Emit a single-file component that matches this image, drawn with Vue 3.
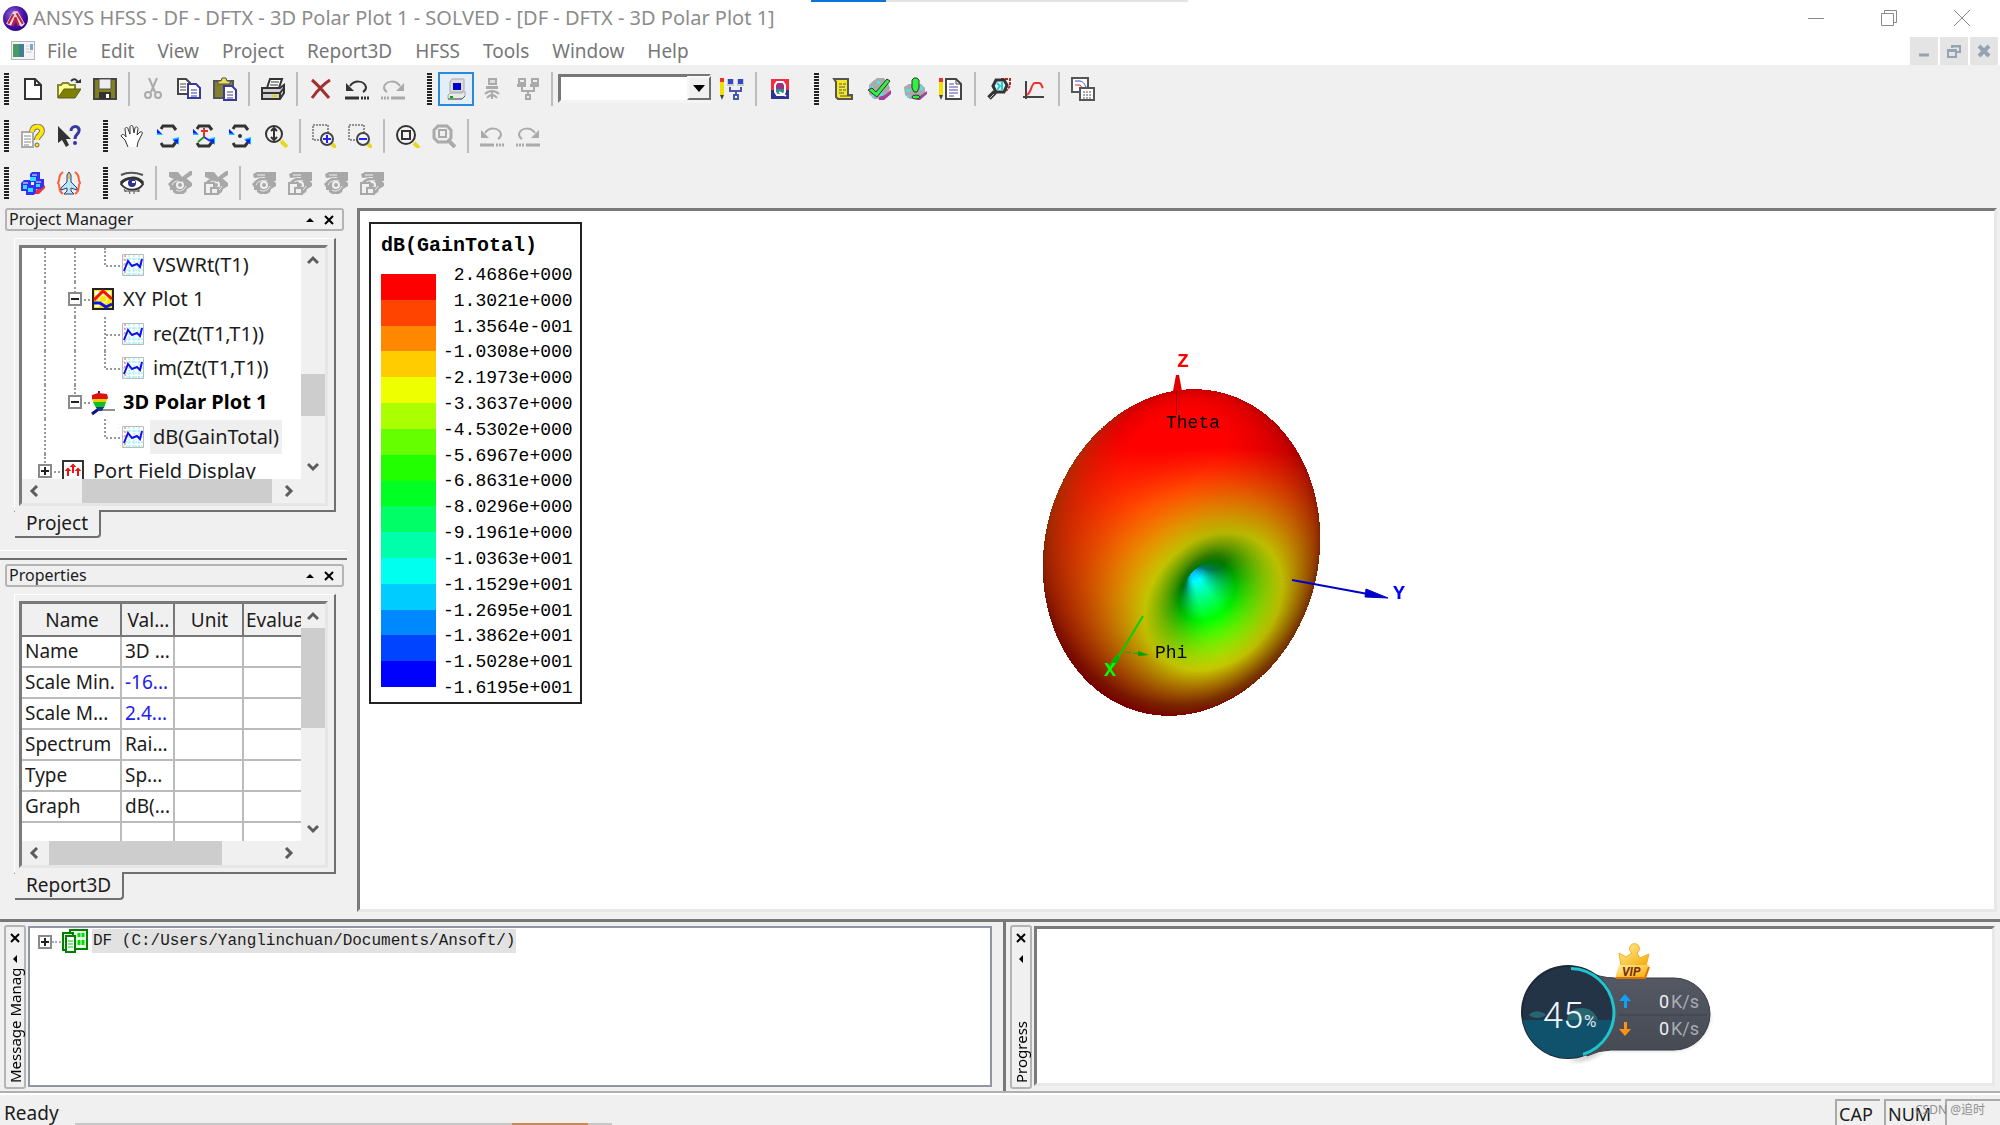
<!-- src/App.vue -->
<template>
  <div class="app">
    <header class="title-bar">
      <svg class="app-logo" viewBox="0 0 24 24">
        <defs>
          <radialGradient id="logoBall" cx="0.4" cy="0.35" r="0.7">
            <stop offset="0" stop-color="#8f6fd0" />
            <stop offset="0.6" stop-color="#4a10a8" />
            <stop offset="1" stop-color="#2c0080" />
          </radialGradient>
        </defs>
        <circle cx="12" cy="12" r="12" fill="url(#logoBall)" />
        <path d="M3 17l7-12h4l7 12-3 3-2-1-4-9-4 9-3-1z" fill="#e4d8ea" />
        <path d="M5 17l5-9M9 19l3-8M15 19l-3-8M19 17L13 7" stroke="#c8202c" stroke-width="2" fill="none" />
      </svg>
      <h1 class="title-text">ANSYS HFSS - DF - DFTX - 3D Polar Plot 1 - SOLVED - [DF - DFTX - 3D Polar Plot 1]</h1>
      <div class="load-strip"><span class="load-done"></span></div>
      <div class="window-buttons">
        <button aria-label="Minimize"><svg viewBox="0 0 16 16"><path d="M0 8.500h16" /></svg></button>
        <button aria-label="Restore"><svg viewBox="0 0 16 16"><path d="M.5 3.500h12v12H.5zM3.500 3.500v-3h12v12h-3" /></svg></button>
        <button aria-label="Close"><svg viewBox="0 0 16 16"><path d="M0 0l16 16M16 0L0 16" /></svg></button>
      </div>
    </header>

    <nav class="menu-bar">
      <svg class="menu-doc" viewBox="0 0 24 19">
        <rect x="0.5" y="0.500" width="23" height="18" fill="#f4f4f4" stroke="#b8b8b8" />
        <rect x="2" y="3" width="11" height="13" fill="#3f7f98" />
        <path d="M2 3h6v13H2z" fill="#4a9a60" />
        <path d="M19 3h3v6h-3z" fill="#7fa4c8" />
        <path d="M15 5h3M15 8h3M15 11h6" stroke="#ccc" />
      </svg>
      <button v-for="m in menus" :key="m" class="menu-item">{{ m }}</button>
      <div class="mdi-buttons">
        <button aria-label="Minimize child"><svg viewBox="0 0 14 14"><path d="M2 11h10" stroke-width="3" /></svg></button>
        <button aria-label="Restore child"><svg viewBox="0 0 14 14"><path d="M5 4V2h8v6h-3M5 2.500h8" stroke-width="2" /><path d="M1 6h8v7H1zM1 7h8" stroke-width="2" /></svg></button>
        <button aria-label="Close child"><svg viewBox="0 0 14 14"><path d="M2 2l10 10M12 2L2 12" stroke-width="4" /></svg></button>
      </div>
    </nav>

    <div class="toolbars">
      <div v-for="(row, r) in toolbars" :key="r" class="tool-row">
        <div v-for="(group, g) in row" :key="g" class="tool-group">
          <span class="grip"></span>
          <template v-for="(item, i) in group" :key="i">
            <span v-if="item === '|'" class="tool-sep"></span>
            <span v-else-if="item === 'combo'" class="combo">
              <select aria-label="Machine"><option></option></select>
              <span class="combo-arrow"></span>
            </span>
            <button v-else class="tool-btn" :class="{ active: item === 'local' }" :aria-label="item">
              <svg viewBox="0 0 24 24" v-html="icons[item]"></svg>
            </button>
          </template>
        </div>
      </div>
    </div>

    <main class="workspace">
      <aside class="dock">
        <section class="dock-panel">
          <div class="dock-head">
            <h2>Project Manager</h2>
            <button aria-label="Collapse Project Manager"><svg viewBox="0 0 10 10"><path d="M1 7l4-4 4 4z" fill="#000" /></svg></button>
            <button aria-label="Close Project Manager"><svg viewBox="0 0 10 10"><path d="M1 1l8 8M9 1L1 9" stroke="#000" stroke-width="2" /></svg></button>
          </div>
          <div class="frame">
            <div class="sunken">
              <div class="scroll-row">
                <div class="view tree-view">
                  <ul class="tree">
                    <li v-for="node in tree" :key="node.label" class="node">
                      <span v-for="(c, i) in node.cells" :key="i" class="cell" :class="c">
                        <span v-if="c.includes('minus') || c.includes('plus')" class="expander" :class="{ closed: c.includes('plus') }"></span>
                      </span>
                      <svg class="node-icon" viewBox="0 0 22 22" v-html="treeIcons[node.icon]"></svg>
                      <span class="node-label" :class="{ bold: node.bold, selected: node.selected }">{{ node.label }}</span>
                    </li>
                  </ul>
                </div>
                <div class="vscroll">
                  <button aria-label="Scroll up"><svg viewBox="0 0 12 12"><path d="M1 9l5-5 5 5" /></svg></button>
                  <span class="thumb tree-thumb"></span>
                  <button aria-label="Scroll down"><svg viewBox="0 0 12 12"><path d="M1 3l5 5 5-5" /></svg></button>
                </div>
              </div>
              <div class="hscroll">
                <button aria-label="Scroll left"><svg viewBox="0 0 12 12"><path d="M9 1L4 6l5 5" /></svg></button>
                <span class="thumb tree-hthumb"></span>
                <button aria-label="Scroll right"><svg viewBox="0 0 12 12"><path d="M3 1l5 5-5 5" /></svg></button>
              </div>
            </div>
          </div>
          <button class="tab">Project</button>
        </section>

        <section class="dock-panel second">
          <div class="dock-head">
            <h2>Properties</h2>
            <button aria-label="Collapse Properties"><svg viewBox="0 0 10 10"><path d="M1 7l4-4 4 4z" fill="#000" /></svg></button>
            <button aria-label="Close Properties"><svg viewBox="0 0 10 10"><path d="M1 1l8 8M9 1L1 9" stroke="#000" stroke-width="2" /></svg></button>
          </div>
          <div class="frame">
            <div class="sunken">
              <div class="scroll-row">
                <div class="view props-view">
                  <table class="props">
                    <colgroup>
                      <col class="col-name" /><col class="col-value" /><col class="col-unit" /><col class="col-eval" />
                    </colgroup>
                    <thead>
                      <tr><th>Name</th><th>Val...</th><th>Unit</th><th>Evalua</th></tr>
                    </thead>
                    <tbody>
                      <tr v-for="p in properties" :key="p.name">
                        <td>{{ p.name }}</td>
                        <td :class="{ editable: p.editable }">{{ p.value }}</td>
                        <td></td>
                        <td></td>
                      </tr>
                    </tbody>
                  </table>
                </div>
                <div class="vscroll">
                  <button aria-label="Scroll up"><svg viewBox="0 0 12 12"><path d="M1 9l5-5 5 5" /></svg></button>
                  <span class="thumb props-thumb"></span>
                  <button aria-label="Scroll down"><svg viewBox="0 0 12 12"><path d="M1 3l5 5 5-5" /></svg></button>
                </div>
              </div>
              <div class="hscroll">
                <button aria-label="Scroll left"><svg viewBox="0 0 12 12"><path d="M9 1L4 6l5 5" /></svg></button>
                <span class="thumb props-hthumb"></span>
                <button aria-label="Scroll right"><svg viewBox="0 0 12 12"><path d="M3 1l5 5-5 5" /></svg></button>
              </div>
            </div>
          </div>
          <button class="tab">Report3D</button>
        </section>
      </aside>

      <section class="viewer">
        <div class="legend">
          <h3>dB(GainTotal)</h3>
          <div class="legend-body">
            <div class="bands">
              <span v-for="n in 16" :key="n" :style="{ background: bandColor(n - 1) }"></span>
            </div>
            <ol class="levels">
              <li v-for="v in levels" :key="v">{{ v }}</li>
            </ol>
          </div>
        </div>
        <div class="plot">
          <canvas ref="plotRef" width="420" height="400"></canvas>
          <svg class="axes" viewBox="0 0 420 400">
            <path d="M157.500 50v26" stroke="#a00000" stroke-width="1" />
            <path d="M157 36h3l3 16h-9z" fill="#e00000" />
            <text x="158" y="28" fill="#f00" class="axis-name">Z</text>
            <text x="147" y="89" class="axis-text">Theta</text>
            <path d="M273 241l76 14" stroke="#0000c8" stroke-width="2" />
            <path d="M347 250l22 9-23-1z" fill="#0000c8" stroke="#0000c8" />
            <text x="374" y="260" fill="#00f" class="axis-name">Y</text>
            <path d="M124 277l-26 43" stroke="#00d000" stroke-width="2" />
            <path d="M98 316l-8 11 5 0 6-9z" fill="#00b000" stroke="#00c000" />
            <path d="M107 313l14 2" stroke="#00b000" stroke-width="1" stroke-dasharray="5 2" />
            <path d="M119 312l11 4-11 1z" fill="#00a000" />
            <text x="85" y="337" fill="#0f0" class="axis-name">X</text>
            <text x="136" y="319" class="axis-text">Phi</text>
          </svg>
        </div>
      </section>
    </main>

    <section class="bottom">
      <div class="bottom-pane messages">
        <div class="side-head">
          <button aria-label="Close Message Manager"><svg viewBox="0 0 10 10"><path d="M1 1l8 8M9 1L1 9" stroke="#000" stroke-width="2" /></svg></button>
          <button aria-label="Collapse Message Manager"><svg viewBox="0 0 10 10"><path d="M7 1L3 5l4 4z" fill="#000" /></svg></button>
          <span class="side-title">Message Manager</span>
        </div>
        <div class="message-box">
          <span class="expander closed"></span>
          <span class="dots"></span>
          <svg class="message-icon" viewBox="0 0 26 24">
            <path d="M8 1h17v19H8z" fill="#e6ffe6" stroke="#008000" stroke-width="2" />
            <path d="M1 4h10v17H1z" fill="#d8f8d8" stroke="#008000" stroke-width="2" />
            <path d="M4 7h9v16H4z" fill="#fff" stroke="#008000" stroke-width="2" />
            <path d="M6 12h5M6 15h5M6 18h5" stroke="#0c0" stroke-width="1" />
            <path d="M17 4v4M21 4v4M17 11v5M21 11v5" stroke="#00e000" stroke-width="3" />
          </svg>
          <span class="message-text">DF (C:/Users/Yanglinchuan/Documents/Ansoft/)</span>
        </div>
      </div>
      <div class="bottom-pane progress">
        <div class="side-head">
          <button aria-label="Close Progress"><svg viewBox="0 0 10 10"><path d="M1 1l8 8M9 1L1 9" stroke="#000" stroke-width="2" /></svg></button>
          <button aria-label="Collapse Progress"><svg viewBox="0 0 10 10"><path d="M7 1L3 5l4 4z" fill="#000" /></svg></button>
          <span class="side-title">Progress</span>
        </div>
        <div class="progress-box"></div>
      </div>
    </section>

    <footer class="status-bar">
      <span class="status-text">Ready</span>
      <span class="status-cell">CAP</span>
      <span class="status-cell wide">NUM</span>
      <span class="status-cell last"></span>
      <span class="strip"><span class="strip-accent"></span></span>
      <span class="watermark">CSDN @追时</span>
    </footer>

    <!-- floating network meter -->
    <svg class="meter" viewBox="0 0 200 124">
      <defs>
        <linearGradient id="pill" x1="0" y1="0" x2="0" y2="1">
          <stop offset="0" stop-color="#565a66" />
          <stop offset="1" stop-color="#444952" />
        </linearGradient>
        <linearGradient id="gold" x1="0" y1="0" x2="1" y2="1">
          <stop offset="0" stop-color="#fff0a0" />
          <stop offset="1" stop-color="#f8a800" />
        </linearGradient>
        <filter id="soft"><feGaussianBlur stdDeviation="2" /></filter>
        <clipPath id="disc"><circle cx="53" cy="72" r="46" /></clipPath>
      </defs>
      <path d="M53 121a47 47 0 0 0 36-11h70a36 36 0 0 0 36-36" fill="#888" opacity="0.5" filter="url(#soft)" />
      <path d="M70 30Q84 38 100 38h59a36 36 0 0 1 0 72H96Q84 110 72 116z" fill="url(#pill)" stroke="#3a3d44" />
      <path d="M104 75h88" stroke="#3c4048" />
      <circle cx="53" cy="72" r="47" fill="#1c2836" />
      <circle cx="53" cy="72" r="45" fill="#233447" />
      <g clip-path="url(#disc)">
        <path d="M52 80c0-8 6-12 15-12s14 6 16 12zM14 75c4-5 12-5 17 0-5 4-13 4-17 0z" fill="#27656f" />
        <rect x="5" y="80" width="96" height="42" fill="#10516c" />
      </g>
      <path d="M56 28.500a44 44 0 0 1 12 86" fill="none" stroke="#1fc4cc" stroke-width="3" />
      <text x="28" y="88" class="meter-big">45</text>
      <text x="69" y="87" class="meter-pct">%</text>
      <path d="M110 54l6 7h-4v7h-3v-7h-5z" fill="#12a0f4" />
      <path d="M110 96l6-7h-4v-7h-3v7h-5z" fill="#ff9310" />
      <text x="144" y="68" class="meter-num">0</text>
      <text x="156" y="68" class="meter-unit">K/s</text>
      <text x="144" y="95" class="meter-num">0</text>
      <text x="156" y="95" class="meter-unit">K/s</text>
      <path d="M106 26l-2-13 7 4 6-4a5 5 0 1 1 5 0l3 5 9-4-3 12z" fill="url(#gold)" stroke="#f0b020" />
      <path d="M104 25h30l-4 13h-30z" fill="url(#gold)" />
      <path d="M101 38h29l4-11" fill="none" stroke="#e07000" stroke-width="2" />
      <text x="107" y="36" class="meter-vip">VIP</text>
    </svg>
  </div>
</template>

<script setup>
import { ref, onMounted } from 'vue'

const menus = ['File', 'Edit', 'View', 'Project', 'Report3D', 'HFSS', 'Tools', 'Window', 'Help']

// '|' is a separator, 'combo' is the machine list
const toolbars = [
  [
    ['new', 'open', 'save', '|', 'cut', 'copy', 'paste', '|', 'print', '|', 'delete', 'undo', 'redo'],
    ['local', 'remote', 'distributed', '|', 'combo', 'editMachines', '|', 'queue'],
    ['notes', 'validate', 'analyze', 'editNotes', '|', 'solution', 'report', '|', 'matrix']
  ],
  [
    ['help', 'whatsThis'],
    ['pan', 'rotate', 'rotateAxis', 'rotateCenter', 'zoom', '|', 'zoomIn', 'zoomOut', '|', 'fitAll', 'fitSelection', '|', 'viewUndo', 'viewRedo']
  ],
  [
    ['cubes', 'plane'],
    ['eye', '|', 'hideSel', 'hideSelBox', '|', 'showSel', 'showSelBox', 'showAll', 'showAllBox']
  ]
]

const page = (x, y) => `<path d="M${x} ${y}h8l4 4v10h-12z" fill="#fff" stroke="#3a3a9c" stroke-width="2"/><path d="M${x + 3} ${y + 6}h6M${x + 3} ${y + 9}h6M${x + 3} ${y + 12}h6" stroke="#3a3a9c"/>`
const undoArc = (c) => `<path d="M5 9C9 3 19 3 21 10c0 3-1 4-3 5" fill="none" stroke="${c}" stroke-width="2"/><path d="M1 6v8h8z" fill="${c}"/><path d="M0 21h14M16 21h2M19 21h2M22 21h2" stroke="${c}" stroke-width="3"/>`
const redoArc = (c) => `<g transform="matrix(-1 0 0 1 24 0)">${undoArc(c)}</g>`
const rotateArrows = '<path d="M5 5l2-3h10l3 4M5 19l2 3h10l3-4" fill="none" stroke="#333" stroke-width="3"/><path d="M1 5v6h6z" fill="#00c8ff"/><path d="M1 5v4l5 1z" fill="#11f"/><path d="M23 13v8l-7-6z" fill="#00c8ff"/><path d="M22 15v5l-5-4z" fill="#11f"/>'
const lens = (x, y, r, c, handle) => `<path d="M${x + r - 1} ${y + r - 1}l6 6" stroke="${handle}" stroke-width="4"/><circle cx="${x}" cy="${y}" r="${r}" fill="#f4f4f4" stroke="${c}" stroke-width="2"/>`
const grayEye = '<path d="M0 13l4-4 4-2h10l6 5v3l-5 3-1 3-3 2H8l-3-2v-2H2v-3z" fill="#a8a8a8"/><path d="M4 14c2-4 6-5 11-4M8 19c3 2 8 1 10-4" fill="none" stroke="#f0f0f0" stroke-width="1"/><circle cx="12" cy="14" r="3" fill="none" stroke="#f0f0f0" stroke-width="2"/>'
const cross = '<path d="M1 1h9l4 5L22 0h2v4L13 11 1 6z" fill="#a8a8a8"/>'
const flag = '<path d="M1 3l4-2h19v9h-5L12 6 2 7z" fill="#a8a8a8"/><path d="M5 4h8" stroke="#f0f0f0"/>'
const box = '<path d="M1 12h9v11H1z" fill="#f0f0f0" stroke="#a8a8a8" stroke-width="2"/><path d="M7 17h7v6H7z" fill="#f0f0f0" stroke="#a8a8a8" stroke-width="2"/>'

const icons = {
  new: '<path d="M4 2h10l6 6v14H4z" fill="#fff" stroke="#333" stroke-width="2"/><path d="M14 2v6h6" fill="none" stroke="#333" stroke-width="2"/>',
  open: '<path d="M1 21V8h3l2-2h5l2 2h5v5" fill="#ffff90" stroke="#85853a" stroke-width="2"/><path d="M1 21l6-9h17l-6 9z" fill="#808000" stroke="#5c5c20"/><path d="M14 4c3-3 6-2 7 2" fill="none" stroke="#333" stroke-width="2"/><path d="M18 6h6V2z" fill="#333"/>',
  save: '<path d="M1 2h22v20H1z" fill="#808020" stroke="#444" stroke-width="2"/><path d="M6 2h12v10H6z" fill="#eee" stroke="#555"/><path d="M6 15h12v7H6z" fill="#333"/><path d="M13 17h3v4h-3z" fill="#fff"/>',
  cut: '<path d="M8 1l6 14M16 1l-6 14" stroke="#aaa" stroke-width="2"/><circle cx="7" cy="18" r="3" fill="none" stroke="#aaa" stroke-width="2"/><circle cx="17" cy="18" r="3" fill="none" stroke="#aaa" stroke-width="2"/>',
  copy: '<path d="M1 2h8l4 4v11H1z" fill="#fff" stroke="#444" stroke-width="2"/><path d="M3 7h6M3 10h6M3 13h6" stroke="#444"/>' + page(11, 7),
  paste: '<path d="M1 4h19v17H1z" fill="#808030" stroke="#555" stroke-width="2"/><path d="M5 7V4h3l1-3h4l1 3h3v3z" fill="#e8e050" stroke="#555"/>' + page(11, 9),
  print: '<path d="M6 11L9 2h12l-3 9" fill="#fff" stroke="#333" stroke-width="2"/><path d="M10 5h8M9 8h8" stroke="#333"/><path d="M1 11h18l4-3v8l-4 6H1z" fill="#d0d0d0" stroke="#333" stroke-width="2"/><path d="M1 16h18v5M19 16l4-5" fill="none" stroke="#333" stroke-width="2"/><path d="M11 19h5" stroke="#e0d800" stroke-width="2"/>',
  delete: '<path d="M3 3c6 5 11 11 17 18M21 3C13 8 8 14 3 21" fill="none" stroke="#a03030" stroke-width="3"/>',
  undo: undoArc('#333'),
  redo: redoArc('#aaa'),
  local: '<path d="M6 5l2-3h12v11l-2 2H6z" fill="#ddd" stroke="#aaa"/><path d="M9 6h8v7H9z" fill="#00c"/><path d="M4 18l2-2h12l3-2v5l-3 3H4z" fill="#e8e8e8" stroke="#aaa"/><path d="M4 22h14l3-3" fill="none" stroke="#555"/><path d="M6 20h3" stroke="#0a0" stroke-width="2"/>',
  remote: '<path d="M8 1h9v7H8zM6 9h12v3H6z" fill="#aaa"/><path d="M10 3h5v3h-5z" fill="#ddd"/><path d="M5 17c4-4 10-4 14 0M7 21c3-4 7-4 10 0M12 14v8" fill="none" stroke="#aaa" stroke-width="2"/>',
  distributed: '<path d="M2 1h8v6H2zM15 1h8v6h-8zM1 7h9v3H1zM14 7h9v3h-9z" fill="#aaa"/><path d="M4 3h4v2H4zM17 3h4v2h-4z" fill="#eee"/><path d="M6 10v4h12v-4M12 14v4" fill="none" stroke="#aaa" stroke-width="2"/><path d="M10 18h4v4h-4z" fill="#eee" stroke="#aaa" stroke-width="2"/>',
  editMachines: '<path d="M2 5v13" stroke="#f0e000" stroke-width="4"/><path d="M2 1v4" stroke="#f03030" stroke-width="4"/><path d="M0 18h4l-2 5z" fill="#444"/><path d="M7 2h7v7H7zM17 2h7v7h-7z" fill="#ccc"/><path d="M8 2h5v5H8zM18 2h5v5h-5z" fill="#3048c8"/><path d="M10 10v4h11v-4M16 14v4" fill="none" stroke="#4858b0" stroke-width="2"/><path d="M14 18h4v4h-4z" fill="#fff" stroke="#4858b0" stroke-width="2"/>',
  queue: '<path d="M3 2h18v20H3z" fill="#f03040"/><path d="M3 13h18v9H3z" fill="#2e3190"/><path d="M8 6h8v6H8z" fill="#a03080"/><path d="M8 12h8v6H8z" fill="#309090"/><path d="M9 5h6l2 3v7l-2 3H9l-2-3V8z" fill="none" stroke="#fff" stroke-width="2"/><path d="M11 15l7 4" stroke="#fff" stroke-width="2"/>',
  notes: '<path d="M3 2h14v16h4v4H7l-2-2V5z" fill="#f4e820" stroke="#555" stroke-width="2"/><path d="M8 7h3M12 7h3M8 10h6M8 13h3M12 13h3M8 16h5" stroke="#555" stroke-width="1"/><path d="M9 19h11" stroke="#555"/>',
  validate: '<path d="M2 8l4-4 4-3h7l4 5 2 5-2 7-5 4H7l-5-5z" fill="#aaa"/><path d="M12 23h5l7-6v-4l-6 5-6 2z" fill="#a040a0"/><path d="M3 9h3v3H3zM10 4h3v3h-3zM5 18h2v3H5zM13 16h3v3h-3z" fill="#50e0e8"/><path d="M1 13l4-2 4 4L20 2l3 2L10 20z" fill="#30f040" stroke="#333" stroke-width="1"/>',
  analyze: '<path d="M1 10l5-3h12l4 4v6l-6 5H7l-5-4z" fill="#aaa"/><path d="M13 23h4l7-6v-3l-7 5z" fill="#a040a0"/><path d="M3 12h4v3H3zM17 9h3v4h-3zM4 18h2v3H4z" fill="#50e0e8"/><path d="M9 3l2-2h3l2 2v8l-2 4h-3l-2-4z" fill="#30f040" stroke="#333"/><ellipse cx="13" cy="20" rx="4" ry="2" fill="#30f040" stroke="#333"/>',
  editNotes: '<path d="M2 5v13" stroke="#f0e000" stroke-width="4"/><path d="M2 1v4" stroke="#f03030" stroke-width="4"/><path d="M0 18h4l-2 5z" fill="#444"/><path d="M7 2h10l5 5v15H7z" fill="#fff" stroke="#444" stroke-width="2"/><path d="M17 2v5h5" fill="none" stroke="#444"/><path d="M10 7h5M10 10h9M10 13h9M10 16h9M10 19h5" stroke="#4848b0"/>',
  solution: '<path d="M14 2h9v7l-4 5" fill="none" stroke="#b02828" stroke-width="2" stroke-dasharray="3 1"/><path d="M9 3h8l3 5-3 7H9L6 9z" fill="#d8f8f8" stroke="#333" stroke-width="3"/><path d="M10 6l3 3-3 4M15 5v9" fill="none" stroke="#30c8d0" stroke-width="2"/><path d="M8 15l-6 6" stroke="#333" stroke-width="5"/><path d="M7 17l-4 4" stroke="#ccc"/>',
  report: '<path d="M3 4v18M0 20h21" fill="none" stroke="#444" stroke-width="2"/><path d="M4 18c5-3 4-12 8-12h4c3 0 2 3 4 5" fill="none" stroke="#f03030" stroke-width="2"/>',
  matrix: '<path d="M1 1h16v14H1z" fill="#fff" stroke="#555" stroke-width="2"/><path d="M4 4h5c4 1 5 4 6 6" stroke="#4040e0" fill="none"/><path d="M4 8h5l3 4" stroke="#e03030" fill="none"/><path d="M9 11h14v12H9z" fill="#fff" stroke="#555" stroke-width="2"/><path d="M12 15h8M12 18h8M12 21h8" stroke="#555" stroke-dasharray="2 1"/>',
  help: '<path d="M1 8h11v15H1z" fill="#fff" stroke="#aaa" stroke-width="2"/><path d="M3 12h7M3 15h7M3 18h7M3 21h5" stroke="#888"/><path d="M11 8c0-7 10-7 10-1 0 4-5 4-5 9" fill="none" stroke="#777" stroke-width="6"/><path d="M11 8c0-7 10-7 10-1 0 4-5 4-5 9" fill="none" stroke="#ffe800" stroke-width="4"/><circle cx="16" cy="21" r="2" fill="#ffe800" stroke="#666"/>',
  whatsThis: '<path d="M1 2v17l4-3 4 7 3-2-3-6h5z" fill="#333"/><path d="M14 7c0-6 9-6 8 0 0 3-4 3-4 8" fill="none" stroke="#3838a0" stroke-width="3"/><circle cx="18" cy="19" r="2" fill="#3838a0"/>',
  pan: '<path d="M8 23l-3-7-4-4c1-3 4-1 5 1L5 5c0-2 3-2 3 0l2 5V3c0-2 3-2 3 0l1 6 1-5c1-2 3-1 3 1l-1 6 3-3c2-1 3 1 2 2l-4 8-1 5" fill="#fff" stroke="#333" stroke-width="1"/>',
  rotate: rotateArrows,
  rotateAxis: rotateArrows + '<path d="M12 4v9M9 7h7" stroke="#e83030" stroke-width="2"/><path d="M12 13l-6 5" stroke="#20a020" stroke-width="2"/><path d="M12 13l6 4" stroke="#3030e0" stroke-width="2"/>',
  rotateCenter: rotateArrows + '<circle cx="12" cy="12" r="2" fill="#333"/>',
  zoom: lens(10, 10, 8, '#333', '#e8d820') + '<path d="M10 5v10M7 7l3-3 3 3M7 13l3 3 3-3" stroke="#333" fill="none" stroke-width="2"/>',
  zoomIn: '<path d="M1 1h15v15H1z" fill="none" stroke="#333" stroke-dasharray="2 1"/>' + lens(15, 15, 6, '#444', '#e8d820') + '<path d="M15 11v8M11 15h8" stroke="#22f" stroke-width="2"/>',
  zoomOut: '<path d="M1 1h15v15H1z" fill="none" stroke="#333" stroke-dasharray="2 1"/>' + lens(15, 15, 6, '#444', '#e8d820') + '<path d="M11 15h8" stroke="#22f" stroke-width="2"/>',
  fitAll: lens(10, 11, 9, '#333', '#e8d820') + '<path d="M6 7h8v8H6z" fill="none" stroke="#333" stroke-width="2"/>',
  fitSelection: '<path d="M16 16l7 7" stroke="#aaa" stroke-width="4"/><path d="M6 2h9l4 4v8l-4 4H6l-4-4V6z" fill="#f0f0f0" stroke="#aaa" stroke-width="3"/><path d="M7 6h7v7H7z" fill="none" stroke="#aaa" stroke-width="2"/>',
  viewUndo: undoArc('#aaa'),
  viewRedo: redoArc('#aaa'),
  cubes: '<path d="M12 23h6l7-7-4-4z" fill="#f03040"/><path d="M9 3l2-2h8v8l-2 2H9zM0 12l3-3h7v8l-2 3H0zM13 11l2-3h8v7l-3 3h-7zM5 17l3-3h7v7l-2 3H5z" fill="#3030f8"/><path d="M11 4h5M2 12h5M15 11h5" stroke="#fff"/><path d="M9 6h6v4H9zM2 14h4v4H2zM15 13h4v3h-4zM7 17h5v4H7z" fill="#30e0ff"/>',
  plane: '<path d="M6 1c-6 4-2 6-5 11 3 3-1 7 5 11M18 1c6 4 2 6 5 11-3 3 1 7-5 11" fill="none" stroke="#ff6038" stroke-width="2"/><path d="M12 1l2 3v7l6 6v2l-6-2v3l3 3h-10l3-3v-3l-6 2v-2l6-6V4z" fill="#b8e8f0" stroke="#303878"/><path d="M12 3v5" stroke="#d8c850" stroke-width="2"/>',
  eye: '<path d="M1 4c6-3 14-3 22 0" fill="none" stroke="#555" stroke-width="2"/><path d="M1 13c5-7 16-8 22 0-4 7-16 8-22 0z" fill="#fff" stroke="#333" stroke-width="2"/><path d="M1 12c5-6 16-7 22 0" fill="none" stroke="#333" stroke-width="3"/><circle cx="12" cy="12" r="4" fill="#303090"/><path d="M12 10h3v2h-3z" fill="#fff"/><path d="M4 18l2 3M9 20l1 3M14 20v3M19 18l-1 3M4 20h16" stroke="#555" stroke-width="1"/>',
  hideSel: grayEye + cross,
  hideSelBox: grayEye + cross + box,
  showSel: grayEye + flag,
  showSelBox: grayEye + flag + box,
  showAll: grayEye + flag,
  showAllBox: grayEye + flag + box
}

const treeIcons = {
  trace: '<path d="M.5.5h21v21H.5z" fill="#fff" stroke="#bbb"/><path d="M1 5h20M1 11h20M1 16h20M1 20h20M7 1v20M12 1v20M17 1v20" stroke="#8ee" stroke-dasharray="2 1"/><path d="M3 1v20" stroke="#f44" stroke-dasharray="2 2"/><path d="M2 17l4-10 4 5 5-2 3 3 2-8" fill="none" stroke="#11e" stroke-width="2"/>',
  xy: '<path d="M1 1h20v20H1z" fill="#ffe800" stroke="#222" stroke-width="2"/><path d="M3 3h4v4H3zM15 3h4v4h-4zM3 16h4v3H3z" fill="#fff"/><circle cx="11" cy="11" r="4" fill="none" stroke="#fff09a" stroke-width="2"/><path d="M2 12l9-9 9 8" fill="none" stroke="#e11" stroke-width="3"/><path d="M2 15l6 0 6 4 6-3" fill="none" stroke="#11e" stroke-width="3"/>',
  polar: '<path d="M7 0v5" stroke="#22a" stroke-width="2"/><path d="M10 19h13" stroke="#222"/><path d="M0 23l8-6" stroke="#118" stroke-width="3"/><path d="M0 4l6-2 9 1 1 4-3 4H3L0 8z" fill="#e01010"/><path d="M0 8h15l-1 4H2z" fill="#e8d000"/><path d="M1 11h13l-2 6H4z" fill="#10c020"/><path d="M4 16h8l-2 4H6z" fill="#113a90"/>',
  port: '<path d="M1 1h20v20H1z" fill="#fff" stroke="#333" stroke-width="2"/><path d="M6 16v-5M11 13V7M16 16v-5M5 10l1-1 1 1zM10 6l1-1 1 1zM15 10l1-1 1 1z" fill="#e11" stroke="#e11" stroke-width="2"/>'
}

// cells draw the dotted guide lines: line = passing, end = elbow, tee = branch
const tree = [
  { label: 'VSWRt(T1)', icon: 'trace', cells: ['line', 'line', 'end'] },
  { label: 'XY Plot 1', icon: 'xy', cells: ['line', 'tee minus'] },
  { label: 're(Zt(T1,T1))', icon: 'trace', cells: ['line', 'line', 'tee'] },
  { label: 'im(Zt(T1,T1))', icon: 'trace', cells: ['line', 'line', 'end'] },
  { label: '3D Polar Plot 1', icon: 'polar', cells: ['line', 'end minus'], bold: true },
  { label: 'dB(GainTotal)', icon: 'trace', cells: ['line', 'none', 'end'], selected: true },
  { label: 'Port Field Display', icon: 'port', cells: ['end plus'] }
]

const properties = [
  { name: 'Name', value: '3D ...' },
  { name: 'Scale Min.', value: '-16...', editable: true },
  { name: 'Scale M...', value: '2.4...', editable: true },
  { name: 'Spectrum', value: 'Rai...' },
  { name: 'Type', value: 'Sp...' },
  { name: 'Graph', value: 'dB(...' },
  { name: '', value: '' }
]

const levels = [
  '2.4686e+000', '1.3021e+000', '1.3564e-001', '-1.0308e+000', '-2.1973e+000', '-3.3637e+000',
  '-4.5302e+000', '-5.6967e+000', '-6.8631e+000', '-8.0296e+000', '-9.1961e+000', '-1.0363e+001',
  '-1.1529e+001', '-1.2695e+001', '-1.3862e+001', '-1.5028e+001', '-1.6195e+001'
]

const bandColor = (i) => `hsl(${i * 16}, 100%, 50%)`

const plotRef = ref(null)

// rainbow: 0 = blue, 1 = red
const rainbow = (t) => {
  const h = (1 - Math.min(1, Math.max(0, t))) * 4
  const f = h % 1
  if (h < 1) return [1, f, 0]
  if (h < 2) return [1 - f, 1, 0]
  if (h < 3) return [0, 1, f]
  return [0, 1 - f, 1]
}

const cross3 = (a, b) => [a[1] * b[2] - a[2] * b[1], a[2] * b[0] - a[0] * b[2], a[0] * b[1] - a[1] * b[0]]
const unit = (a) => {
  const n = Math.hypot(...a)
  return a.map((c) => c / n)
}

// antenna axis in screen space: right, up, towards the viewer
const AXIS = unit([0.39, -0.5, 0.77])
const SIDE = unit(cross3([0, 1, 0], AXIS))
const TOP = cross3(AXIS, SIDE)
// half-extent of the pattern in pixels
const SX = 142
const SY = 171

const surface = (th, ph) => {
  const a = Math.cos(th)
  const s = Math.sin(th)
  const e = s * Math.cos(ph)
  const z = s * Math.sin(ph)
  const power = Math.pow(Math.abs(s), 2.6) + 0.0136
  const r = Math.max(0, 1 + (10 * Math.log10(power)) / 18.66)
  return {
    t: r + 0.04 * s * s - 0.1 * e * e,
    x: SX * r * (a * AXIS[0] + e * SIDE[0] + z * TOP[0]),
    y: SY * r * (a * AXIS[1] + e * SIDE[1] + z * TOP[1]),
    d: 160 * r * (a * AXIS[2] + e * SIDE[2] + z * TOP[2])
  }
}

const drawPattern = (canvas) => {
  const W = canvas.width
  const H = canvas.height
  const ctx = canvas.getContext('2d')
  const img = ctx.createImageData(W, H)
  const depth = new Float32Array(W * H).fill(-999)
  const ox = 162
  const oy = 213
  const NT = 800
  const NP = 1500
  const step = 0.004
  for (let i = 0; i < NT; i++) {
    const th = ((i + 0.5) / NT) * Math.PI
    for (let j = 0; j < NP; j++) {
      const ph = (j / NP) * Math.PI * 2
      const p = surface(th, ph)
      const px = Math.round(ox + p.x)
      const py = Math.round(oy - p.y)
      if (px < 0 || py < 0 || px >= W || py >= H) continue
      const k = py * W + px
      if (p.d <= depth[k]) continue
      depth[k] = p.d
      const u = surface(th + step, ph)
      const v = surface(th, ph + step)
      const n = unit(cross3([u.x - p.x, u.y - p.y, u.d - p.d], [v.x - p.x, v.y - p.y, v.d - p.d]))
      const sign = n[2] < 0 ? -1 : 1
      const lit = Math.max(0, sign * (0.45 * n[1] + 0.89 * n[2]))
      const shade = Math.min(1, 0.47 + 0.58 * lit)
      const c = rainbow(p.t)
      img.data[k * 4] = c[0] * shade * 255
      img.data[k * 4 + 1] = c[1] * shade * 255
      img.data[k * 4 + 2] = c[2] * shade * 255
      img.data[k * 4 + 3] = 255
    }
  }
  ctx.putImageData(img, 0, 0)
}

onMounted(() => {
  drawPattern(plotRef.value)
})
</script>

<style>
body {
  margin: 0;
  background: #f0f0f0;
}
</style>

<style scoped>
.app {
  position: relative;
  display: flex;
  flex-direction: column;
  min-height: 100vh;
  background: #f0f0f0;
  color: #1c1c1c;
  font-family: "Noto Sans", "Noto Sans CJK SC", sans-serif;
  font-size: 19px;
  overflow: hidden;
}

button {
  font: inherit;
  color: inherit;
  border: 0;
  padding: 0;
  background: none;
}

h1, h2, h3, ul, ol {
  margin: 0;
  padding: 0;
  font-weight: normal;
  list-style: none;
}

svg {
  display: block;
}

/* title bar */
.title-bar {
  position: relative;
  display: flex;
  align-items: center;
  height: 36px;
  padding: 0 2px 0 3px;
  background: #fff;
}

.app-logo {
  width: 25px;
  height: 25px;
}

.title-text {
  flex: 1;
  margin-left: 5px;
  font-size: 20px;
  line-height: 34px;
  color: #8c8c8c;
  white-space: nowrap;
}

.load-strip {
  position: absolute;
  top: 0;
  left: 811px;
  width: 377px;
  height: 2px;
  background: #e4e4e4;
}

.load-done {
  display: block;
  width: 20%;
  height: 100%;
  background: #0a74da;
}

.window-buttons {
  display: flex;
}

.window-buttons button {
  display: flex;
  align-items: center;
  justify-content: center;
  width: 73px;
  height: 34px;
}

.window-buttons svg {
  width: 16px;
  height: 16px;
  fill: none;
  stroke: #8a8a8a;
  stroke-width: 1;
}

/* menu */
.menu-bar {
  display: flex;
  align-items: center;
  height: 29px;
  padding: 0 2px 0 11px;
  background: #fff;
}

.menu-doc {
  width: 24px;
  height: 19px;
  margin-right: 12px;
}

.menu-item {
  margin-right: 23px;
  color: #777;
  line-height: 30px;
}

.mdi-buttons {
  display: flex;
  gap: 2px;
  margin-left: auto;
}

.mdi-buttons button {
  display: flex;
  align-items: center;
  justify-content: center;
  width: 28px;
  height: 28px;
  background: #e4e4e4;
}

.mdi-buttons svg {
  width: 14px;
  height: 14px;
  fill: none;
  stroke: #95a3b3;
}

/* toolbars */
.tool-row {
  display: flex;
  gap: 16px;
  height: 47px;
  padding-left: 4px;
}

.tool-group {
  display: flex;
  align-items: center;
}

.grip {
  width: 5px;
  height: 32px;
  margin-right: 6px;
  background: repeating-linear-gradient(#222 0 2px, #f0f0f0 2px 3px);
}

.tool-btn {
  display: flex;
  align-items: center;
  justify-content: center;
  width: 36px;
  height: 34px;
}

.tool-btn svg {
  width: 24px;
  height: 24px;
}

.tool-btn.active {
  background: #e3eef8;
  box-shadow: inset 0 0 0 2px #2a8ad8;
}

.tool-sep {
  width: 2px;
  height: 34px;
  margin: 0 5px;
  background: #bdbdbd;
}

.combo {
  position: relative;
  align-self: flex-start;
  width: 153px;
  height: 29px;
  margin: 8px 3px 0 0;
}

.combo select {
  width: 100%;
  height: 100%;
  appearance: none;
  background: #fff;
  border: 3px solid;
  border-color: #777 #f4f4f4 #f4f4f4 #777;
  border-radius: 0;
}

.combo-arrow {
  position: absolute;
  top: 3px;
  right: 0;
  width: 24px;
  height: 24px;
  box-sizing: border-box;
  background: #f0f0f0;
  border: 2px solid;
  border-color: #f8f8f8 #6c6c6c #6c6c6c #f8f8f8;
  pointer-events: none;
}

.combo-arrow::after {
  content: "";
  display: block;
  margin: 7px auto 0;
  width: 0;
  border: 6px solid transparent;
  border-top: 7px solid #000;
  border-bottom: 0;
}

/* docks */
.workspace {
  display: flex;
  flex: 1;
  padding: 2px 3px 7px 0;
}

.dock {
  width: 347px;
  margin-right: 10px;
}

.dock-panel {
  padding: 0 0 13px 5px;
}

.dock-panel.second {
  border-top: 2px solid #6f6f6f;
  margin-top: 7px;
  padding-top: 4px;
  padding-bottom: 0;
  box-shadow: 0 -7px 0 #f0f0f0, 0 -8px 0 #fff;
}

.dock-head {
  display: flex;
  align-items: center;
  gap: 9px;
  width: 339px;
  height: 23px;
  box-sizing: border-box;
  padding: 0 8px 0 2px;
  border: 2px solid #b4b4b4;
  border-radius: 3px;
}

.dock-head h2 {
  flex: 1;
  font-size: 16px;
  line-height: 19px;
}

.dock-head svg {
  width: 10px;
  height: 10px;
}

.frame {
  width: 322px;
  box-sizing: border-box;
  margin: 7px 0 0 9px;
  padding: 6px 6px 4px 4px;
  border: 1px solid #fff;
  border-right: 2px solid #707070;
  border-bottom: 2px solid #707070;
}

.sunken {
  border: 3px solid;
  border-color: #7a7a7a #e6e6e6 #e6e6e6 #7a7a7a;
}

.scroll-row {
  display: flex;
}

.view {
  flex: 1;
  min-width: 0;
  overflow: hidden;
  background: #fff;
}

.tree-view {
  height: 231px;
}

.props-view {
  height: 237px;
}

.vscroll {
  display: flex;
  flex-direction: column;
  justify-content: space-between;
  width: 24px;
}

.hscroll {
  display: flex;
  justify-content: space-between;
  height: 24px;
  margin-right: 24px;
}

.vscroll button,
.hscroll button {
  display: flex;
  align-items: center;
  justify-content: center;
  width: 24px;
  height: 24px;
}

.vscroll svg,
.hscroll svg {
  width: 12px;
  height: 12px;
  fill: none;
  stroke: #5c5c5c;
  stroke-width: 3;
}

.thumb {
  background: #cdcdcd;
}

.tree-thumb {
  height: 42px;
  margin-top: 62px;
}

.props-thumb {
  height: 100px;
  margin-bottom: 89px;
}

.tree-hthumb {
  width: 190px;
  margin-left: 30px;
}

.props-hthumb {
  width: 173px;
  margin-right: 53px;
}

.tab {
  position: relative;
  display: block;
  height: 28px;
  margin: -2px 0 0 10px;
  padding: 0 11px 0 11px;
  background: #f0f0f0;
  border-right: 2px solid #707070;
  border-bottom: 2px solid #707070;
  border-radius: 0 0 4px 0;
  line-height: 26px;
}

/* tree */
.tree {
  display: grid;
  grid-template-rows: repeat(7, 1fr);
  height: 240px;
  padding-left: 8px;
  font-size: 20px;
}

.node {
  display: flex;
  align-items: center;
  white-space: nowrap;
}

.cell {
  position: relative;
  display: flex;
  align-items: center;
  justify-content: center;
  width: 30px;
  height: 100%;
}

.cell::before {
  content: "";
  position: absolute;
  top: 0;
  bottom: 0;
  left: 14px;
  border-left: 2px dotted #999;
}

.cell.end::before {
  bottom: 50%;
}

.cell.none::before {
  display: none;
}

.cell.end::after,
.cell.tee::after {
  content: "";
  position: absolute;
  top: 50%;
  left: 16px;
  right: 0;
  border-top: 2px dotted #999;
}

.expander {
  position: relative;
  z-index: 1;
  width: 14px;
  height: 14px;
  box-sizing: border-box;
  border: 2px solid #8a8a8a;
  background: linear-gradient(#222, #222) center / 8px 2px no-repeat #fff;
}

.expander.closed {
  background: linear-gradient(#222, #222) center / 8px 2px no-repeat, linear-gradient(#222, #222) center / 2px 8px no-repeat #fff;
}

.node-icon {
  width: 22px;
  height: 22px;
  margin: 0 6px 0 2px;
  overflow: visible;
}

.node-label {
  padding: 0 3px;
  line-height: 34px;
}

.node-label.bold {
  font-weight: bold;
  color: #000;
}

.node-label.selected {
  background: #efefef;
}

/* properties */
.props {
  width: 330px;
  table-layout: fixed;
  border-collapse: collapse;
}

.col-name { width: 99px; }
.col-value { width: 53px; }
.col-unit { width: 69px; }

.props th {
  height: 32px;
  padding: 0 0 0 2px;
  box-sizing: border-box;
  font-weight: normal;
  line-height: 28px;
  background: #f0f0f0;
  border-right: 2px solid #777;
  border-bottom: 2px solid #777;
  white-space: nowrap;
}

.props th:last-child {
  text-align: left;
}

.props td {
  height: 31px;
  padding: 0 0 0 3px;
  box-sizing: border-box;
  line-height: 29px;
  border-right: 2px solid #bbb;
  border-bottom: 2px solid #bbb;
  white-space: nowrap;
}

.props td.editable {
  color: #2020f0;
}

/* viewer */
.viewer {
  position: relative;
  flex: 1;
  background: #fff;
  border: 3px solid;
  border-color: #7a7a7a #e8e8e8 #e8e8e8 #7a7a7a;
}

.legend {
  display: inline-block;
  margin: 11px 0 0 9px;
  padding: 9px 7px 0 10px;
  border: 2px solid #222;
  color: #000;
  font-family: "Liberation Mono", monospace;
}

.legend h3 {
  font-size: 20px;
  font-weight: bold;
  line-height: 26px;
}

.legend-body {
  display: flex;
  gap: 7px;
}

.bands {
  display: flex;
  flex-direction: column;
  width: 55px;
  height: 413px;
  margin: 15px 0;
}

.bands span {
  flex: 1;
}

.levels {
  display: grid;
  grid-template-rows: repeat(17, 1fr);
  align-items: center;
  height: 439px;
  margin-top: 3px;
  font-size: 18px;
  line-height: 20px;
  text-align: right;
}

.plot {
  position: absolute;
  left: calc(50% - 158px);
  top: calc(50% - 221px);
  width: 420px;
  height: 400px;
}

.axes {
  position: absolute;
  inset: 0;
}

.axis-name {
  font-family: "Liberation Mono", monospace;
  font-size: 20px;
  font-weight: bold;
}

.axis-text {
  font-family: "Liberation Mono", monospace;
  font-size: 18px;
}

/* bottom panes */
.bottom {
  display: flex;
  height: 174px;
  border-top: 3px solid #777;
  border-bottom: 2px solid #b0b0b0;
  box-sizing: border-box;
}

.bottom-pane {
  display: flex;
  padding: 3px 5px 2px 4px;
  box-sizing: border-box;
}

.messages {
  width: 50%;
  padding-right: 8px;
}

.progress {
  flex: 1;
  margin-left: 3px;
  border-left: 3px solid #777;
}

.side-head {
  display: flex;
  flex-direction: column;
  align-items: center;
  gap: 11px;
  width: 22px;
  box-sizing: border-box;
  padding: 6px 0 4px;
  border: 2px solid #b4b4b4;
  border-radius: 3px;
}

.side-head svg {
  width: 10px;
  height: 10px;
}

.side-title {
  flex: 1;
  min-height: 0;
  margin-top: -6px;
  overflow: hidden;
  writing-mode: vertical-rl;
  transform: rotate(180deg);
  font-size: 15px;
  line-height: 22px;
  color: #000;
  white-space: nowrap;
}

.message-box {
  display: flex;
  align-items: flex-start;
  flex: 1;
  margin: 1px 0 2px 2px;
  padding: 1px 0 0 8px;
  background: #fff;
  border: 2px solid #8f95a3;
}

.message-box .expander {
  margin-top: 6px;
}

.dots {
  width: 9px;
  margin-top: 12px;
  border-top: 2px dotted #aaa;
}

.message-icon {
  width: 26px;
  height: 24px;
  margin: 0 4px 0 1px;
}

.message-text {
  padding: 0 1px;
  background: #e2e2e2;
  font-family: "Liberation Mono", monospace;
  font-size: 16px;
  line-height: 24px;
}

.progress-box {
  flex: 1;
  margin: 1px 0 3px 2px;
  background: #fff;
  border: 3px solid;
  border-color: #7a7a7a #e8e8e8 #e8e8e8 #7a7a7a;
}

/* status */
.status-bar {
  position: relative;
  display: flex;
  gap: 4px;
  height: 32px;
  padding: 0 0 0 4px;
  box-sizing: border-box;
  border-top: 2px solid #fff;
}

.status-text {
  flex: 1;
  line-height: 36px;
}

.status-cell {
  width: 45px;
  box-sizing: border-box;
  margin-top: 4px;
  padding-left: 2px;
  border-left: 2px solid #aaa;
  border-top: 2px solid #aaa;
  font-size: 18px;
  line-height: 26px;
}

.status-cell.wide {
  width: 57px;
}

.status-cell.last {
  width: 55px;
}

.strip {
  position: absolute;
  left: 75px;
  bottom: 0;
  width: 537px;
  height: 2px;
  background: #c8c8c8;
}

.strip-accent {
  display: block;
  width: 76px;
  height: 2px;
  margin-left: 437px;
  background: #c98a58;
}

.watermark {
  position: absolute;
  right: 15px;
  bottom: 5px;
  font-size: 12px;
  line-height: 20px;
  color: #8f8f8f;
}

/* meter */
.meter {
  position: absolute;
  right: 285px;
  bottom: 61px;
  width: 200px;
  height: 124px;
  font-family: Roboto, sans-serif;
}

.meter-big {
  font-size: 36px;
  font-weight: 300;
  fill: #eef6fa;
}

.meter-pct {
  font-size: 17px;
  fill: #dce8ee;
}

.meter-num {
  font-size: 18px;
  fill: #f0f0f0;
}

.meter-unit {
  font-size: 18px;
  fill: #a8abb2;
}

.meter-vip {
  font-size: 12px;
  font-weight: bold;
  font-style: italic;
  fill: #7a2c08;
}
</style>
